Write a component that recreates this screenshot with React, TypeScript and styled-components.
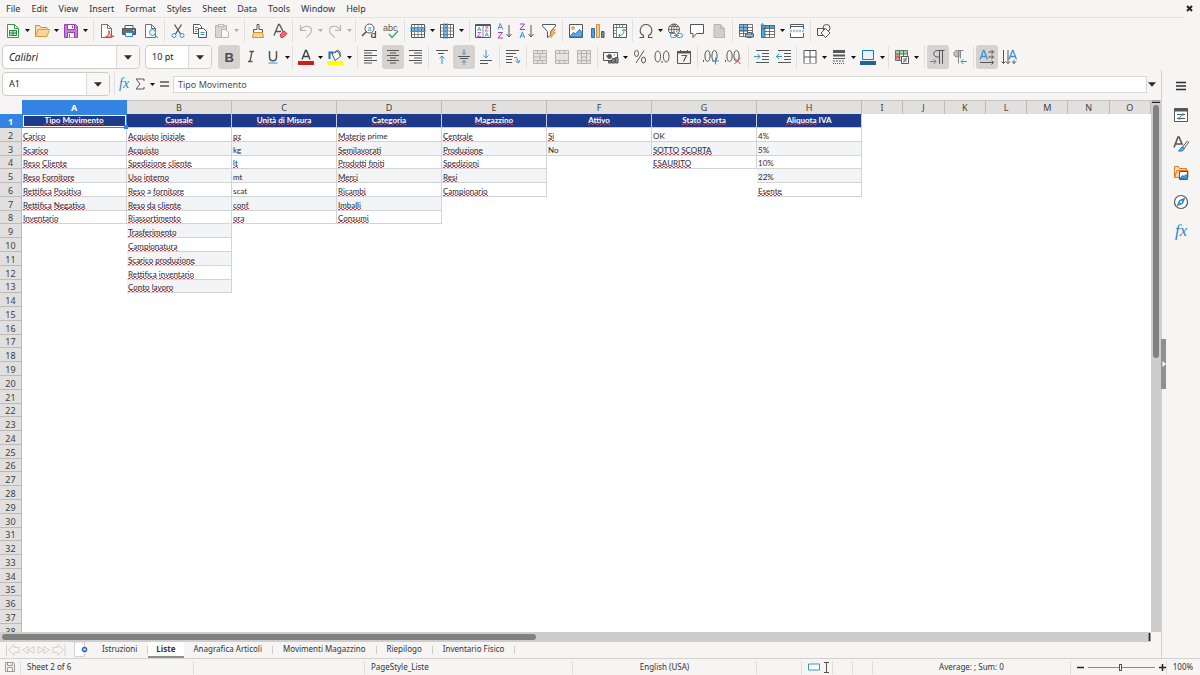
import React from "react";
import styled, { createGlobalStyle, css } from "styled-components";

const INK = "#555657";
const BLUE = "#3a93d0";
const PURPLE = "#a33fb5";
const UI = `"Noto Sans", "Liberation Sans", sans-serif`;
const SHEET = `Lato, "Liberation Sans", sans-serif`;

const Global = createGlobalStyle`
  * { box-sizing: border-box; }
  html, body { margin: 0; height: 100%; }
  #root { height: 100%; }
  body { background: #f6f5f4; color: #303436; font: 9px/12px ${UI}; overflow: hidden; }
  button, input { font: inherit; color: inherit; }
  button { border: 0; padding: 0; background: none; }
  svg { display: block; flex: none; }
`;

const Window = styled.div`
  display: flex;
  flex-direction: column;
  height: 100vh;
`;

const MenuBar = styled.nav`
  display: flex;
  align-items: center;
  height: 17px;
  padding-right: 6px;
`;
const MenuItem = styled.button`
  height: 16px;
  padding: 0 5px;
  margin-left: 1px;
  line-height: 16px;
`;
const CloseButton = styled.button`
  margin-left: auto;
`;

const Toolbar = styled.div<{ $ruled?: boolean }>`
  display: flex;
  align-items: center;
  height: ${(p) => (p.$ruled ? 27 : 26)}px;
  padding: 0 16px 0 2px;
  ${(p) =>
    p.$ruled &&
    css`
      background: linear-gradient(#e3e2e0, #e3e2e0) 0 0 / calc(100% - 16px) 1px no-repeat;
    `}
`;
const ToolButton = styled.button<{ $on?: boolean; $off?: boolean }>`
  display: flex;
  align-items: center;
  justify-content: center;
  flex: none;
  width: 22px;
  height: 24px;
  border-radius: 3px;
  background: ${(p) => (p.$on ? "#d5d2cf" : "transparent")};
  opacity: ${(p) => (p.$off ? 0.4 : 1)};
`;
const ArrowButton = styled.button<{ $off?: boolean }>`
  display: flex;
  align-items: center;
  justify-content: center;
  flex: none;
  width: 7px;
  height: 24px;
  opacity: ${(p) => (p.$off ? 0.3 : 1)};
`;
const Divider = styled.span<{ $gap: number }>`
  flex: none;
  width: 1px;
  height: 22px;
  margin: 0 2px 0 ${(p) => p.$gap - 3}px;
  background: #e2e0de;
`;
const Combo = styled.div<{ $width: number }>`
  display: flex;
  flex: none;
  width: ${(p) => p.$width}px;
  height: 24px;
  border: 1px solid #cfcbc7;
  border-radius: 4px;
  background: #fff;
  overflow: hidden;
`;
const ComboInput = styled.input<{ $italic?: boolean }>`
  flex: 1;
  min-width: 0;
  padding: 0 6px;
  border: 0;
  background: none;
  color: #1c1e20;
  font-size: ${(p) => (p.$italic ? 10 : 9)}px;
  font-style: ${(p) => (p.$italic ? "italic" : "normal")};
`;
const ComboArrow = styled.button`
  display: flex;
  align-items: center;
  justify-content: center;
  width: 23px;
  border-left: 1px solid #dcd9d6;
  background: #f8f7f6;
`;
const FontGroup = styled.div`
  display: flex;
  gap: 5px;
  margin-right: 6px;
`;

const Middle = styled.div`
  display: flex;
  flex: 1;
  min-height: 0;
`;
const Editor = styled.main`
  display: flex;
  flex-direction: column;
  flex: 1;
  min-width: 0;
`;
const FormulaBar = styled.div`
  display: flex;
  align-items: center;
  height: 30px;
  padding: 0 6px 2px 2px;
`;
const FormulaInput = styled.input`
  flex: 1;
  min-width: 0;
  height: 17px;
  margin: 0 1px 0 2px;
  padding: 0 4px;
  border: 1px solid #dad8d5;
  background: #fff;
  color: #4c5052;
  font-size: 9px;
`;
const SmallTool = styled.button<{ $width: number }>`
  display: flex;
  align-items: center;
  justify-content: center;
  flex: none;
  width: ${(p) => p.$width}px;
  height: 22px;
`;

const GridRow = styled.div`
  display: flex;
  flex: 1;
  min-height: 0;
`;
const GridView = styled.div`
  flex: 1;
  min-width: 0;
  overflow: hidden;
  background: #fff;
`;
const Sheet = styled.table`
  width: 100%;
  table-layout: fixed;
  border-collapse: separate;
  border-spacing: 0;
`;
const RowHeadCol = styled.col`
  width: 22px;
`;
const DataCol = styled.col`
  width: 105px;
`;
const Row = styled.tr`
  height: 14px;
  &:nth-child(9n + 4),
  &:nth-child(9n + 8) {
    height: 13px;
  }
`;
const headStyle = css<{ $active?: boolean }>`
  font-size: 9px;
  line-height: 11px;
  font-weight: ${(p) => (p.$active ? 700 : 400)};
  color: ${(p) => (p.$active ? "#fff" : "#3c3f41")};
  background: ${(p) => (p.$active ? "#3584e4" : "#e1e0df")};
`;
const ColumnHead = styled.th<{ $active?: boolean }>`
  ${headStyle}
  height: 14px;
  padding: 0 0 1px;
  border-right: 1px solid ${(p) => (p.$active ? "#3584e4" : "#bcbbba")};
  border-top: 1px solid ${(p) => (p.$active ? "#3584e4" : "#c4c3c2")};
`;
const RowHead = styled.th<{ $active?: boolean }>`
  ${headStyle}
  padding: 1px 0 0;
  border-bottom: 1px solid ${(p) => (p.$active ? "#3584e4" : "#bcbbba")};
  border-right: 1px solid ${(p) => (p.$active ? "#3584e4" : "#bcbbba")};
`;
const Corner = styled.td`
  padding: 0;
  background: #f6f5f4;
`;
const TitleCell = styled.td`
  position: relative;
  padding: 0;
  border-right: 1px solid #c5cbdc;
  border-bottom: 1px solid #c5cbdc;
  background: #1e3a8a;
  color: #fff;
  font: 700 8px/12px ${SHEET};
  text-align: center;
  vertical-align: top;
  white-space: nowrap;
`;
const Cell = styled.td<{ $filled: boolean; $alt: boolean }>`
  padding: 0 0 0 1px;
  font: 8px/10px ${SHEET};
  color: #1f2937;
  white-space: nowrap;
  vertical-align: bottom;
  ${(p) =>
    p.$filled &&
    css`
      border-right: 1px solid #d1d5db;
      border-bottom: 1px solid #d1d5db;
      background: ${p.$alt ? "#f3f4f6" : "#fff"};
    `}
`;
const Misspelt = styled.span`
  background: 
    repeating-linear-gradient(90deg, #e0393c 0 2px, transparent 2px 4px) 0 100% / 100% 1px no-repeat,
    repeating-linear-gradient(90deg, transparent 0 2px, #e0393c 2px 4px) 0 calc(100% - 1px) / 100% 1px no-repeat;
`;
const Cursor = styled.span`
  position: absolute;
  inset: 0 -1px -1px 0;
  border: 1px solid #3584e4;
  outline: 1px solid #fff;
  outline-offset: -2px;
  z-index: 1;
  &::after {
    content: "";
    position: absolute;
    right: -2px;
    bottom: -2px;
    width: 4px;
    height: 4px;
    background: #3584e4;
  }
`;

const VScroll = styled.div`
  display: flex;
  flex-direction: column;
  align-items: center;
  width: 10px;
  background: #cdcdcd;
`;
const VSplit = styled.span`
  width: 8px;
  height: 3px;
  margin-bottom: 2px;
  border-bottom: 1px solid #222;
  background: #aaa;
`;
const VThumb = styled.span`
  width: 6px;
  height: 47.6%;
  border-radius: 3px;
  background: #7f807f;
`;
const HScroll = styled.div`
  display: flex;
  align-items: center;
  justify-content: space-between;
  height: 10px;
  margin-right: 10px;
  padding: 0 0 0 2px;
  background: #cdcdcd;
`;
const HThumb = styled.span`
  width: 46.5%;
  height: 6px;
  border-radius: 3px;
  background: #7f817f;
`;
const HSplit = styled.span`
  width: 3px;
  height: 8px;
  border-right: 1px solid #999;
  border-left: 1px solid #999;
  background: #222;
`;

const TabBar = styled.div`
  display: flex;
  align-items: flex-start;
  height: 16px;
  padding-left: 6px;
`;
const TabNav = styled.button`
  width: 15px;
  height: 15px;
  display: flex;
  align-items: center;
  justify-content: center;
`;
const AddSheet = styled.button`
  display: flex;
  width: 18px;
  height: 15px;
  margin-left: 8px;
`;
const Tab = styled.button<{ $active?: boolean }>`
  height: 16px;
  padding: 0 11px 2px 10px;
  line-height: 14px;
  font-size: 8px;
  white-space: nowrap;
  background: linear-gradient(#cfcdcb, #cfcdcb) 100% 4px / 1px 8px no-repeat;
  ${(p) =>
    p.$active &&
    css`
      padding: 0 8px;
      font-weight: 700;
      background: #fff;
      border-bottom: 2px solid #8d8f8f;
    `}
`;

const SideBar = styled.aside`
  position: relative;
  display: flex;
  flex-direction: column;
  align-items: center;
  gap: 7px;
  width: 39px;
  padding: 5px 0 0;
  border-left: 1px solid #d4d2cf;
`;
const SideButton = styled.button`
  display: flex;
  align-items: center;
  justify-content: center;
  width: 24px;
  height: 22px;
`;
const SideHandle = styled.button`
  position: absolute;
  left: -1px;
  top: 50%;
  width: 5px;
  height: 50px;
  margin-top: -25px;
  background: #8f9090;
  display: flex;
  align-items: center;
  justify-content: center;
`;

const StatusBar = styled.footer`
  display: grid;
  grid-template-columns: 21fr 173fr 171fr 208fr 184fr 45fr 31fr 20fr 20fr 198fr 96fr 33fr;
  align-items: center;
  height: 17px;
  border-top: 1px solid #d4d2cf;
  font-size: 8px;
`;
const Status = styled.div<{ $center?: boolean; $bare?: boolean }>`
  display: flex;
  align-items: center;
  justify-content: ${(p) => (p.$center ? "center" : "flex-start")};
  gap: 4px;
  min-width: 0;
  height: 13px;
  padding-left: ${(p) => (p.$center ? 0 : 6)}px;
  border-right: 1px solid ${(p) => (p.$bare ? "transparent" : "#e0dedc")};
  white-space: nowrap;
`;
const ZoomSlider = styled.input`
  appearance: none;
  flex: 1;
  min-width: 0;
  height: 9px;
  margin: 0;
  background: linear-gradient(#8a8a8a, #8a8a8a) 0 50% / 100% 1px no-repeat;
  &::-webkit-slider-thumb {
    appearance: none;
    width: 3px;
    height: 7px;
    border: 1px solid #555;
    background: #f6f5f4;
  }
`;

type P = { children: React.ReactNode; w?: number; h?: number };
const Svg = ({ children, w = 16, h = 16 }: P) => (
  <svg width={w} height={h} viewBox={`0 0 ${w} ${h}`} fill="none" stroke={INK} strokeWidth="1" aria-hidden="true">
    {children}
  </svg>
);
const Caret = ({ big }: { big?: boolean }) =>
  big ? (
    <svg width="8" height="5" viewBox="0 0 8 5" aria-hidden="true"><path d="M0 0.3h8L4 4.8z" fill="#2b2d2e" /></svg>
  ) : (
    <svg width="5" height="3" viewBox="0 0 5 3" aria-hidden="true"><path d="M0 0h5L2.500 3z" fill="#111" /></svg>
  );

const alignLines = (rows: [number, number][]) =>
  rows.map(([a, b], i) => <path key={i} d={`M${a} ${1.5 + i * 2.5}H${b}`} />);

const Glyph = styled.text`
  stroke: none;
  font-family: "Liberation Sans", sans-serif;
`;
const Serif = styled.text`
  stroke: none;
  font-family: "Liberation Serif", serif;
`;

const icons: Record<string, React.ReactNode> = {
  new: (
    <Svg>
      <path d="M2.500 1.500h7l4 4v9h-11z" fill="#fff" stroke="#3b9a48" />
      <path d="M9.500 1.500v4h4" stroke="#3b9a48" />
      <path d="M4.500 7.500h7v5h-7zM4.500 10h7M8 7.500v5" stroke="#2e8b3d" fill="#bfe5c3" />
    </Svg>
  ),
  open: (
    <Svg>
      <path d="M1.500 13.500v-11h4l1.500 2h6v2" stroke="#e08b28" fill="#fbe0b5" />
      <path d="M1.500 13.500l2.500-7h11.500l-2.500 7z" stroke="#e39a3c" fill="#f9d59b" />
    </Svg>
  ),
  save: (
    <Svg>
      <path d="M1.500 1.500h11l2 2v11h-13z" fill="#c47fd0" stroke="#9a3fae" />
      <path d="M4.500 1.500h7v5h-7z" fill="#fff" stroke="#9a3fae" />
      <path d="M4.500 14.500v-5h7v5" fill="#fff" stroke="#9a3fae" />
      <path d="M9.500 2.500v2.500M6.500 11v3" stroke="#9a3fae" />
    </Svg>
  ),
  pdf: (
    <Svg>
      <path d="M2.500 1.500h6l4 4v9h-10z" fill="#fff" stroke="#6e6e6e" />
      <path d="M8.500 1.500v4h4" stroke="#6e6e6e" />
      <path d="M6.500 14c3-1.500 4-4 3.500-6.500c0 4 2 5.500 5 6c-3-.8-6-.5-8.500.5z" stroke="#d8343a" strokeWidth=".9" fill="#fff" />
    </Svg>
  ),
  print: (
    <Svg>
      <path d="M4 5.500v-3h8v3" fill="#fff" />
      <path d="M1.500 5.500h13v6h-13z" fill="#6a6d6f" />
      <path d="M4.500 9.500h7v4h-7z" fill="#fff" stroke="#2f8bd0" />
      <path d="M12 7.500h1" stroke="#fff" />
    </Svg>
  ),
  preview: (
    <Svg>
      <path d="M2.500 1.500h6l4 4v9h-10z" fill="#fff" stroke="#6e6e6e" />
      <path d="M8.500 1.500v4h4" stroke="#6e6e6e" />
      <circle cx="9.500" cy="9.500" r="3" stroke={BLUE} fill="#e9f4fb" />
      <path d="M11.500 11.500l3.500 3.500" stroke={BLUE} />
    </Svg>
  ),
  cut: (
    <Svg>
      <path d="M4.500 1.500l6 9.500M11.500 1.500l-6 9.500" strokeWidth="1.300" />
      <circle cx="4" cy="12.500" r="2" stroke={BLUE} />
      <circle cx="12" cy="12.500" r="2" stroke={BLUE} />
    </Svg>
  ),
  copy: (
    <Svg>
      <path d="M1.500 1.500h6l2 2v7h-8z" fill="#fff" />
      <path d="M6.500 5.500h5l3 3v6h-8z" fill="#fff" />
      <path d="M3 4.500h3M3 6.500h3M3 8.500h2M8.500 9.500h4M8.500 11.500h4" stroke={BLUE} />
    </Svg>
  ),
  paste: (
    <Svg>
      <path d="M1.500 2.500h11v12h-11z" fill="#aaa" />
      <path d="M4.500 1.500h5v2h-5z" fill="#fff" />
      <path d="M7.500 6.500h4l3 3v5h-7z" fill="#fff" />
    </Svg>
  ),
  clone: (
    <Svg>
      <path d="M7 1.500h2v5h3.500v3h-9v-3h3.500z" fill="#fff" />
      <path d="M3.500 9.500h9l1 5h-11z" fill="#f9d59b" stroke="#e08b28" />
    </Svg>
  ),
  clear: (
    <Svg>
      <path d="M2 12.500l4.500-11h1l4 8M4 8.500h5" strokeWidth="1.300" />
      <path d="M8 12l4-4 3 2.500-4 4h-2z" fill="#f0686b" stroke="#d8343a" />
    </Svg>
  ),
  undo: <Svg><path d="M2.500 2v5.500h5.500M2.500 7.500c2.500-6 11-5.500 11 0c0 3-3 5-5.500 7" strokeWidth="1.100" /></Svg>,
  redo: <Svg><path d="M13.500 2v5.500h-5.500M13.500 7.500c-2.500-6-11-5.500-11 0c0 3 3 5 5.500 7" strokeWidth="1.100" /></Svg>,
  find: (
    <Svg>
      <circle cx="8.500" cy="5.500" r="4.500" fill="#fff" />
      <path d="M5.500 8.500l-4.500 4.500" strokeWidth="1.600" />
      <Glyph x="6.500" y="7.500" fontSize="7" fill={BLUE}>a</Glyph>
      <path d="M14.500 8v7M14.500 12.500a2 2 0 1 0-4 0a2 2 0 1 0 4 0" strokeWidth="1.200" />
    </Svg>
  ),
  spell: (
    <Svg>
      <Glyph x="0" y="8" fontSize="9" fill={INK}>abc</Glyph>
      <path d="M6 11l3 3.500 6-6.500" stroke="#2fa36b" strokeWidth="1.300" />
    </Svg>
  ),
  rows: (
    <Svg>
      <path d="M1.500 1.500h13v13h-13z" fill="#fff" stroke="none" />
      <path d="M.5 4.500h15v4h-15z" fill="#6dbcec" stroke="none" />
      <path d="M4.500 1.500v13M8 1.500v13M11.500 1.500v13M1.500 11.500h13" strokeWidth=".7" />
      <path d="M1.500 1.500h13v13h-13z" />
      <path d="M.5 4.500h15M.5 8.500h15" stroke={BLUE} />
    </Svg>
  ),
  cols: (
    <Svg>
      <path d="M1.500 1.500h13v13h-13z" fill="#fff" stroke="none" />
      <path d="M4.500 .5h4v15h-4z" fill="#6dbcec" stroke="none" />
      <path d="M1.500 5h13M1.500 8h13M1.500 11.500h13M11.500 1.500v13" strokeWidth=".7" />
      <path d="M1.500 1.500h13v13h-13z" />
      <path d="M4.500 .5v15M8.500 .5v15" stroke={BLUE} />
    </Svg>
  ),
  sort: (
    <Svg>
      <path d="M.5 1.500h15v13h-15z" fill="#fff" />
      <path d="M.5 2.500h15" />
      <path d="M8 2v12.500" strokeWidth=".7" />
      <path d="M2.500 8l1.700-4 1.800 4M3 6.700h2.500M10 13.500l1.700-4 1.800 4M10.500 12.200h2.500" stroke={BLUE} strokeWidth=".8" />
      <path d="M2.500 9.500h3.200l-3.200 4h3.500M10 4h3.200l-3.200 4h3.500" stroke={PURPLE} strokeWidth=".8" />
    </Svg>
  ),
  az: (
    <Svg>
      <path d="M1 6.500l2.300-6 2.400 6M1.800 4.500h3" stroke={BLUE} />
      <path d="M1 9.500h4.500l-4.500 5.500h5" stroke={PURPLE} />
      <path d="M12 2v12M9.500 11l2.500 3 2.500-3" />
    </Svg>
  ),
  za: (
    <Svg>
      <path d="M1 1h4.500l-4.500 5.500h5" stroke={PURPLE} />
      <path d="M1 15l2.300-6 2.400 6M1.800 13h3" stroke={BLUE} />
      <path d="M12 2v12M9.500 11l2.500 3 2.500-3" />
    </Svg>
  ),
  filter: (
    <Svg>
      <path d="M1.500 1.500h13v1.500l-5 5.500v4l-3 2v-6l-5-5.500z" fill="#fff" />
      <path d="M12 6.500l-3 5h2l-1.500 3.500 5-5.500h-2.500l2.500-3z" fill="#f8b96b" stroke="#e8892a" strokeWidth=".7" />
    </Svg>
  ),
  image: (
    <Svg>
      <path d="M1.500 1.500h13v13h-13z" fill="#fff" />
      <circle cx="5" cy="5" r="1.500" fill="#f5b04c" stroke="#e8892a" strokeWidth=".6" />
      <path d="M2 13.500l3.500-4 2 1.500 4-4.500 2.500 3v4.500h-12z" fill="#5fa9dc" stroke="#2475b8" />
    </Svg>
  ),
  chart: (
    <Svg>
      <path d="M1.500 5.500h3v9h-3z" fill="#4a9fdd" stroke="#2475b8" />
      <path d="M6.500 1.500h3v13h-3z" fill="#f9cf8f" stroke="#e08b28" />
      <path d="M11.500 8.500h2.500v6h-2.500z" fill="#888" />
    </Svg>
  ),
  pivot: (
    <Svg>
      <path d="M1.500 1.500h13v13h-13z" fill="#fff" />
      <path d="M4.500 1.500v13M1.500 4.500h13M7.500 1.500v3M10.500 1.500v3M1.500 7.500h3M1.500 10.500h3" strokeWidth=".7" />
      <path d="M7 12.500c4 0 5-2 5-6M10 8l2-2 2 2M8.500 10.500l-2 2 2 2" stroke={BLUE} />
    </Svg>
  ),
  omega: <Svg><path d="M1.500 14.500h4v-2c-6-3-3-11 2.500-11s8.500 8 2.500 11v2h4" strokeWidth="1.100" /></Svg>,
  link: (
    <Svg>
      <circle cx="7" cy="6.500" r="5.500" />
      <path d="M1.500 6.500h11M2.500 3.500h9M2.500 9.500h5M7 1v11M7 1c-3.500 3-3.500 8 0 11M7 1c3.500 3 3.500 6 2.500 8" strokeWidth=".8" />
      <rect x="3.500" y="10.500" width="6" height="4" rx="2" stroke={BLUE} fill="#f6f5f4" />
      <rect x="9.500" y="10.500" width="6" height="4" rx="2" stroke={BLUE} fill="#f6f5f4" />
      <path d="M7 12.500h5" stroke={BLUE} />
    </Svg>
  ),
  comment: <Svg><path d="M1.500 1.500h13v9h-7l-3.500 4v-4h-2.500z" fill="#fff" /></Svg>,
  header: (
    <Svg>
      <path d="M3 1.500h6.500l4 4v9h-10.500z" fill="#999" />
      <path d="M9.500 1.500v4h4" />
    </Svg>
  ),
  printRange: (
    <Svg>
      <path d="M1.500 1.500h13v12h-13z" fill="#fff" stroke="none" />
      <path d="M1 1h9v8h-9z" fill="#6dbcec" stroke="none" />
      <path d="M1.500 1.500h13v12h-13zM1.500 4.500h13M1.500 7.500h13M1.500 10.500h13M5.500 1.500v12M9.500 1.500v12" strokeWidth=".8" />
      <path d="M9.500 9.500h4v5h-4z" fill="#fff" />
      <path d="M7.500 11h8v3h-8z" fill="#8fc6ec" />
    </Svg>
  ),
  freeze: (
    <Svg>
      <path d="M1.500 2.500h13v12h-13z" fill="#fff" stroke="none" />
      <path d="M1 2h14v3.500h-10v9.500h-4z" fill="#4ba6e0" stroke="none" />
      <path d="M1.500 2.500h13v12h-13zM1.500 5.500h13M5 2.500v12M9.500 2.500v12M5 8.500h9.500M5 11.500h9.500" strokeWidth=".8" />
      <path d="M2.500 0v4M.5 2h4" stroke={BLUE} />
    </Svg>
  ),
  split: (
    <Svg>
      <path d="M1.500 6v-4.500h13v4.500M1.500 10v4.500h13v-4.500M1.500 3.500h13" fill="#fff" />
      <path d="M1 8h14" stroke={BLUE} strokeDasharray="2 1" />
    </Svg>
  ),
  shapes: (
    <Svg>
      <path d="M1.500 5.500h7v7h-7z" />
      <circle cx="10.500" cy="5" r="3.500" />
      <path d="M9.500 5.500l4.500 4.500-4.500 4.500-4.500-4.500z" fill="#f6f5f4" />
    </Svg>
  ),
  bold: <Svg><Glyph x="3.500" y="12.500" fontSize="13" fontWeight="700" fill="#4a4c4d">B</Glyph></Svg>,
  italic: <Svg><path d="M6.500 2.500h4.500M5 12.500h4.500M9 2.500l-2 10" strokeWidth="1.300" /></Svg>,
  underline: (
    <Svg>
      <path d="M4.500 2v6c0 5 7 5 7 0v-6" strokeWidth="1.500" />
      <path d="M3.500 14h9" stroke={BLUE} />
    </Svg>
  ),
  color: (
    <Svg>
      <path d="M4 10.500l3.500-9h1l3.500 9M5.500 7.500h5" strokeWidth="1.400" stroke="#3f4142" />
      <path d="M0 14h16" stroke="#c9211e" strokeWidth="4" />
    </Svg>
  ),
  fill: (
    <Svg>
      <path d="M5 4.500l5-2.500 4 5-6 4.500z" fill="#fff" />
      <path d="M8 4l2.500-3 2.500 2v4" />
      <path d="M2.500 10v-6.500h4" stroke="#2475b8" strokeWidth="2" />
      <path d="M0 14h16" stroke="#ffff00" strokeWidth="4" />
    </Svg>
  ),
  left: <Svg>{alignLines([[1, 14], [1, 9], [1, 14], [1, 9], [1, 14], [1, 9]])}</Svg>,
  center: <Svg>{alignLines([[2, 14], [5, 11], [2, 14], [5, 11], [2, 14], [5, 11]])}</Svg>,
  right: <Svg>{alignLines([[2, 15], [7, 15], [2, 15], [7, 15], [2, 15], [7, 15]])}</Svg>,
  top: (
    <Svg>
      <path d="M2 1.500h12M4 4.500h6" />
      <path d="M8 15v-8M5.500 9.500l2.500-2.500 2.500 2.500" stroke={BLUE} />
    </Svg>
  ),
  middle: (
    <Svg>
      <path d="M2 7.500h12M4 9.500h8" />
      <path d="M8 0v5.500M6 3.500l2 2 2-2M8 16v-4.500M6 13.500l2-2 2 2" stroke={BLUE} />
    </Svg>
  ),
  bottom: (
    <Svg>
      <path d="M2 11.500h12M2 14.500h8" />
      <path d="M8 1v8M5.500 6.500l2.500 2.500 2.500-2.500" stroke={BLUE} />
    </Svg>
  ),
  wrap: (
    <Svg>
      <path d="M1 1.500h13M1 4.500h10M1 7.500h7M1 10.500h6M1 13.500h6" />
      <path d="M9 8.500h2.500l2 5M10.500 12l3 2 1.500-3" stroke={BLUE} />
    </Svg>
  ),
  merge1: <Svg><path d="M1.500 1.500h13v13h-13zM1.500 4.500h13M1.500 11.500h13M5.500 1.500v3M10.500 1.500v3M5.500 11.500v3M10.500 11.500v3M1.500 8h13M8 4.500v7" fill="#ccc" /></Svg>,
  merge2: <Svg><path d="M1.500 1.500h13v13h-13zM1.500 4.500h13M1.500 11.500h13M5.500 1.500v3M10.500 1.500v3M5.500 11.500v3M10.500 11.500v3" fill="#ccc" /></Svg>,
  merge3: <Svg><path d="M1.500 1.500h13v13h-13zM1.500 4.500h13M1.500 11.500h13M5.500 1.500v13M10.500 1.500v13M5.500 8h5" fill="#ccc" /></Svg>,
  currency: (
    <Svg>
      <path d="M.5 3.500h14v8h-14z" />
      <circle cx="6.500" cy="7.500" r="2" fill={INK} />
      <path d="M3 7h1M11 6h1" />
      <path d="M9 9.500h3v4.500h-3zM12.500 8.500h2.500v5.500h-2.500zM5.500 12h3v2h-3z" fill="#8a8a8a" />
    </Svg>
  ),
  percent: (
    <Svg>
      <ellipse cx="4.500" cy="4.500" rx="2" ry="3" />
      <ellipse cx="11.500" cy="11" rx="2" ry="3" />
      <path d="M12 1.500l-8 12.500" />
    </Svg>
  ),
  decimal: (
    <Svg>
      <ellipse cx="3.800" cy="7.500" rx="2.800" ry="5.500" />
      <ellipse cx="12.200" cy="7.500" rx="2.800" ry="5.500" />
      <path d="M8 12v2" />
    </Svg>
  ),
  date: (
    <Svg>
      <path d="M1.500 2.500h13v12h-13zM4.500 1v2M11.500 1v2" />
      <path d="M1.500 3.500h13" strokeWidth="2" />
      <path d="M5.500 6.500h5l-3 6" strokeWidth="1.200" />
    </Svg>
  ),
  addDec: (
    <Svg>
      <path d="M.5 11v2" />
      <ellipse cx="4.500" cy="7" rx="2.600" ry="5.500" />
      <ellipse cx="11.500" cy="7" rx="2.600" ry="5.500" />
      <path d="M12.500 8.500v7M9 12h7" stroke={BLUE} />
    </Svg>
  ),
  delDec: (
    <Svg>
      <path d="M.5 11v2" />
      <ellipse cx="4.500" cy="7" rx="2.600" ry="5.500" />
      <ellipse cx="11.500" cy="7" rx="2.600" ry="5.500" />
      <path d="M9.500 9l6 6M15.500 9l-6 6" stroke="#e0393c" />
    </Svg>
  ),
  indent: (
    <Svg>
      <path d="M2 1.500h13M8 4.500h7M8 7.500h7M8 10.500h7M2 13.500h13" />
      <path d="M0 7.500h6M3.500 5l2.500 2.500-2.500 2.500" stroke={BLUE} />
    </Svg>
  ),
  outdent: (
    <Svg>
      <path d="M2 1.500h13M8 4.500h7M8 7.500h7M8 10.500h7M2 13.500h13" />
      <path d="M6 7.500h-6M3 5l-2.500 2.500 2.500 2.500" stroke={BLUE} />
    </Svg>
  ),
  borders: (
    <Svg>
      <path d="M2 1.500h12v13h-12z" fill="#fff" />
      <path d="M8 1.500v13M2 8h12" />
      <path d="M2 14.500h12" stroke="#e0a868" />
    </Svg>
  ),
  lineStyle: (
    <Svg>
      <path d="M2 2.500h12" strokeWidth="3" />
      <path d="M2 6.500h12" strokeWidth="2" />
      <path d="M2 9.500h12" />
      <path d="M2 12h12" strokeDasharray="2 1" />
      <path d="M2 14.500h12" strokeDasharray="1 1" />
    </Svg>
  ),
  borderColor: (
    <Svg>
      <path d="M2.500 1.500h11v9h-11z" fill="#e8f3fb" stroke="#2475b8" />
      <path d="M0 14h16" stroke="#2a6099" strokeWidth="4" />
    </Svg>
  ),
  conditional: (
    <Svg>
      <path d="M1.500 1.500h12v3.500h-12z" fill="#8fdc9b" stroke="none" />
      <path d="M1.500 5h4v6.500h-4z" fill="#f18c8e" stroke="none" />
      <path d="M1.500 1.500h12v10h-12zM1.500 5h12M1.500 8h12M5.500 1.500v10M9.500 1.500v10" strokeWidth=".8" />
      <path d="M7.500 7.500h7v7h-7z" fill="#fff" />
      <path d="M9 10h4M9 12h4M12.500 8.500l-3 5" strokeWidth=".8" />
    </Svg>
  ),
  ltr: (
    <Svg>
      <path d="M14.500 1.500h-7c-5 0-5 6.500 0 6.500h1.500M9.500 1.500v13.500M12.500 1.500v13.500" />
      <path d="M0 12.500h6M3.500 10l2.500 2.500-2.500 2.500" stroke={BLUE} />
    </Svg>
  ),
  rtl: (
    <Svg>
      <path d="M4.500 2h4v6h-3c-4 0-4-5-1-6z" fill="#bbb" stroke="none" />
      <path d="M11.500 1.500h-6c-5 0-5 6.500 0 6.500h1v6.500M6.500 1.500v12M8.500 1.500v8" stroke="#888" />
      <path d="M15 12.500h-6M11.500 10l-2.500 2.500 2.500 2.500" stroke={BLUE} />
    </Svg>
  ),
  textH: (
    <Svg>
      <path d="M1 10.500l3.500-9h.5l3.500 9M2.500 7.500h4.500" stroke={BLUE} strokeWidth="1.300" />
      <path d="M9.500 3h5M12.500 1l2 2-2 2M9.500 8h5M12.500 6l2 2-2 2M1 13.500h13.500M12.500 11.500l2 2-2 2" />
    </Svg>
  ),
  textV: (
    <Svg>
      <path d="M8 10.500l3.500-9h.5l3.500 9M9.500 7.500h4.500" stroke={BLUE} strokeWidth="1.300" />
      <path d="M2.500 1v13.500M.5 12.500l2 2 2-2M7 1v13.500M5 12.500l2 2 2-2M13 11v3.500M11 12.500l2 2 2-2" />
    </Svg>
  ),
};

type ToolSpec = [string, string, ("on" | "off" | "drop" | "offdrop")?] | number;

const standard: ToolSpec[] = [
  ["new", "New", "drop"], ["open", "Open", "drop"], ["save", "Save", "drop"], 7,
  ["pdf", "Export as PDF"], ["print", "Print"], ["preview", "Print Preview"], 5,
  ["cut", "Cut"], ["copy", "Copy"], ["paste", "Paste", "offdrop"], 7,
  ["clone", "Clone Formatting"], ["clear", "Clear Formatting"], 4,
  ["undo", "Undo", "offdrop"], ["redo", "Redo", "offdrop"], 5,
  ["find", "Find and Replace"], ["spell", "Spelling"], 5,
  ["rows", "Row", "drop"], ["cols", "Column", "drop"], 7,
  ["sort", "Sort"], ["az", "Sort Ascending"], ["za", "Sort Descending"], ["filter", "AutoFilter"], 5,
  ["image", "Insert Image"], ["chart", "Insert Chart"], ["pivot", "Pivot Table"], 4,
  ["omega", "Special Character", "drop"], ["link", "Hyperlink"], ["comment", "Comment"], ["header", "Headers and Footers", "off"], 5,
  ["printRange", "Print Area"], ["freeze", "Freeze Panes", "drop"], ["split", "Split Window"], 5,
  ["shapes", "Draw Functions"],
];
const formatting: ToolSpec[] = [
  ["bold", "Bold", "on"], ["italic", "Italic"], ["underline", "Underline", "drop"], 4,
  ["color", "Font Color", "drop"], ["fill", "Background Color", "drop"], 7,
  ["left", "Align Left"], ["center", "Center", "on"], ["right", "Align Right"], 5,
  ["top", "Align Top"], ["middle", "Center Vertically", "on"], ["bottom", "Align Bottom"], 5,
  ["wrap", "Wrap Text"], 5,
  ["merge1", "Merge and Center", "off"], ["merge2", "Merge", "off"], ["merge3", "Unmerge", "off"], 5,
  ["currency", "Currency", "drop"], ["percent", "Percent"], ["decimal", "Number"], ["date", "Date"], 5,
  ["addDec", "Add Decimal"], ["delDec", "Delete Decimal"], 7,
  ["indent", "Increase Indent"], ["outdent", "Decrease Indent"], 4,
  ["borders", "Borders", "drop"], ["lineStyle", "Border Style", "drop"], ["borderColor", "Border Color", "drop"], 5,
  ["conditional", "Conditional Formatting", "drop"], 7,
  ["ltr", "Left-To-Right", "on"], ["rtl", "Right-To-Left"], 5,
  ["textH", "Text Direction Horizontal", "on"], ["textV", "Text Direction Vertical"],
];

const Tools = ({ items }: { items: ToolSpec[] }) => (
  <>
    {items.map((t, i) => {
      if (typeof t === "number") return <Divider key={i} $gap={t} />;
      const [id, label, mode] = t;
      const off = mode === "off" || mode === "offdrop";
      return (
        <React.Fragment key={i}>
          <ToolButton type="button" aria-label={label} $on={mode === "on"} $off={off}>{icons[id]}</ToolButton>
          {(mode === "drop" || mode === "offdrop") && (
            <ArrowButton type="button" aria-label={`${label} options`} $off={off}><Caret /></ArrowButton>
          )}
        </React.Fragment>
      );
    })}
  </>
);

const titles = ["Tipo Movimento", "Causale", "Unità di Misura", "Categoria", "Magazzino", "Attivo", "Stato Scorta", "Aliquota IVA"];
const lists: string[][] = [
  ["Carico", "Scarico", "Reso Cliente", "Reso Fornitore", "Rettifica Positiva", "Rettifica Negativa", "Inventario"],
  ["Acquisto iniziale", "Acquisto", "Spedizione cliente", "Uso interno", "Reso a fornitore", "Reso da cliente", "Riassortimento", "Trasferimento", "Campionatura", "Scarico produzione", "Rettifica inventario", "Conto lavoro"],
  ["pz", "kg", "lt", "mt", "scat", "conf", "ora"],
  ["Materie prime", "Semilavorati", "Prodotti finiti", "Merci", "Ricambi", "Imballi", "Consumi"],
  ["Centrale", "Produzione", "Spedizioni", "Resi", "Campionario"],
  ["Sì", "No"],
  ["OK", "SOTTO SCORTA", "ESAURITO"],
  ["4%", "5%", "10%", "22%", "Esente"],
];
const known = new Set(["kg", "mt", "scat", "No", "OK", "prime", "a", "IVA"]);
const Spelled = ({ text }: { text: string }) => (
  <>
    {text.split(" ").map((w, i) => (
      <React.Fragment key={i}>
        {i > 0 && " "}
        {known.has(w) || w.endsWith("%") ? w : <Misspelt>{w}</Misspelt>}
      </React.Fragment>
    ))}
  </>
);

const letters = "ABCDEFGHIJKLMNO".split("");
const tabs = ["Istruzioni", "Liste", "Anagrafica Articoli", "Movimenti Magazzino", "Riepilogo", "Inventario Fisico"];
const tabNav = [
  { label: "First sheet", d: "M.5 1v12M8 1.500L2.500 7L8 12.500v-3h5v-5h-5z" },
  { label: "Previous sheet", d: "M7 3.500L1.500 7L7 10.500zM13 3.500L7.500 7l5.500 3.500z" },
  { label: "Next sheet", d: "M2 3.500L7.500 7L2 10.500zM8 3.500l5.500 3.500L8 10.500z" },
  { label: "Last sheet", d: "M14 1v12M7 1.500L12.500 7L7 12.500v-3h-5v-5h5z" },
];

export default function App() {
  return (
    <Window>
      <Global />
      <MenuBar aria-label="Menu">
        {["File", "Edit", "View", "Insert", "Format", "Styles", "Sheet", "Data", "Tools", "Window", "Help"].map((m) => (
          <MenuItem key={m} type="button">{m}</MenuItem>
        ))}
        <CloseButton type="button" aria-label="Close document">
          <svg width="9" height="9" viewBox="0 0 9 9" aria-hidden="true"><path d="M2 2l5 5M7 2l-5 5" stroke="#222" strokeWidth="2" /></svg>
        </CloseButton>
      </MenuBar>
      <Toolbar $ruled><Tools items={standard} /></Toolbar>
      <Toolbar>
        <FontGroup>
          <Combo $width={138}>
            <ComboInput aria-label="Font name" defaultValue="Calibri" $italic />
            <ComboArrow type="button" aria-label="Font list"><Caret big /></ComboArrow>
          </Combo>
          <Combo $width={67}>
            <ComboInput aria-label="Font size" defaultValue="10 pt" />
            <ComboArrow type="button" aria-label="Size list"><Caret big /></ComboArrow>
          </Combo>
        </FontGroup>
        <Tools items={formatting} />
      </Toolbar>

      <Middle>
        <Editor>
          <FormulaBar>
            <Combo $width={108}>
              <ComboInput aria-label="Name box" defaultValue="A1" />
              <ComboArrow type="button" aria-label="Named ranges"><Caret big /></ComboArrow>
            </Combo>
            <Divider $gap={7} />
            <SmallTool type="button" aria-label="Function wizard" $width={16}>
              <Svg w={12} h={14}><Serif x="0" y="11" fontSize="14" fontStyle="italic" fill="#2f86c9">fx</Serif></Svg>
            </SmallTool>
            <SmallTool type="button" aria-label="Select function" $width={14}>
              <Svg w={10} h={12}><path d="M9 3V1H1l4 5-4 5h8V9" /></Svg>
            </SmallTool>
            <SmallTool type="button" aria-label="Function list" $width={10}><Caret /></SmallTool>
            <SmallTool type="button" aria-label="Formula" $width={14}>
              <Svg w={9} h={8}><path d="M0 2h9M0 6h9" strokeWidth="1.500" /></Svg>
            </SmallTool>
            <FormulaInput aria-label="Input line" defaultValue="Tipo Movimento" />
            <ArrowButton type="button" aria-label="Expand formula bar"><Caret big /></ArrowButton>
          </FormulaBar>

          <GridRow>
            <GridView>
              <Sheet>
                <colgroup>
                  <RowHeadCol />
                  {titles.map((t) => <DataCol key={t} />)}
                  {letters.slice(8).map((l) => <col key={l} />)}
                </colgroup>
                <thead>
                  <tr>
                    <Corner />
                    {letters.map((l, i) => <ColumnHead key={l} scope="col" $active={i === 0}>{l}</ColumnHead>)}
                  </tr>
                </thead>
                <tbody>
                  {Array.from({ length: 38 }, (_, r) => (
                    <Row key={r}>
                      <RowHead scope="row" $active={r === 0}>{r + 1}</RowHead>
                      {titles.map((t, c) =>
                        r === 0 ? (
                          <TitleCell key={t}>
                            <Spelled text={t} />
                            {c === 0 && <Cursor />}
                          </TitleCell>
                        ) : (
                          <Cell key={t} $filled={!!lists[c][r - 1]} $alt={r % 2 === 0}>
                            {lists[c][r - 1] && <Spelled text={lists[c][r - 1]} />}
                          </Cell>
                        )
                      )}
                      <td colSpan={7} />
                    </Row>
                  ))}
                </tbody>
              </Sheet>
            </GridView>
            <VScroll><VSplit /><VThumb /></VScroll>
          </GridRow>
          <HScroll><HThumb /><HSplit /></HScroll>

          <TabBar>
            {tabNav.map((n) => (
              <TabNav key={n.label} type="button" aria-label={n.label}>
                <svg width="15" height="14" viewBox="0 0 15 14" fill="none" stroke="#d3d2d1" aria-hidden="true"><path d={n.d} /></svg>
              </TabNav>
            ))}
            <AddSheet type="button" aria-label="Add sheet">
              <svg width="15" height="15" viewBox="0 0 15 15" fill="none" aria-hidden="true">
                <path d="M.5 0h10v14.500h-10z" fill="#fff" stroke="#d2d2d2" />
                <circle cx="10.500" cy="7.500" r="2" stroke="#2f68b0" strokeWidth="1.500" />
              </svg>
            </AddSheet>
            {tabs.map((t) => <Tab key={t} type="button" $active={t === "Liste"}>{t}</Tab>)}
          </TabBar>
        </Editor>

        <SideBar>
          <SideButton type="button" aria-label="Sidebar settings">
            <Svg w={10} h={10}><path d="M0 1.500h10M0 5h10M0 8.500h10" stroke="#2b2d2e" strokeWidth="1.300" /></Svg>
          </SideButton>
          <SideButton type="button" aria-label="Properties">
            <Svg>
              <path d="M1.500 1.500h13v13h-13z" fill="#fff" />
              <path d="M1 3h14" strokeWidth="3" />
              <path d="M4 7.500h8M4 11.500h8" />
              <path d="M10 6v3M6 10v3M9 7.500l-3 4" stroke={BLUE} />
            </Svg>
          </SideButton>
          <SideButton type="button" aria-label="Styles">
            <Svg>
              <path d="M1 11.500L5 1h1l3.500 8M2.500 8h5.500" strokeWidth="1.600" />
              <path d="M14.500 5l-5 6 1.500 1.500 4.500-6z" fill="#fff" />
              <path d="M9.500 11c-2 0-2 3-4 4c3 .5 6-.5 5.500-2.500z" fill="#5fa9dc" stroke="#2475b8" />
            </Svg>
          </SideButton>
          <SideButton type="button" aria-label="Gallery">
            <Svg>
              <path d="M1.500 12.500v-11h4l1 2h7v2h-9.500z" stroke="#e07a28" fill="#fbe0b5" />
              <path d="M1.500 12.500l2.500-7h11v7z" stroke="#e07a28" fill="#f9d59b" />
              <path d="M6.500 6.500h8v8h-8z" fill="#fff" />
              <path d="M7 13.500l2.500-3 1.500 1 2-2 1.500 2v2.500z" fill="#3f9edd" stroke="#2475b8" />
            </Svg>
          </SideButton>
          <SideButton type="button" aria-label="Navigator">
            <Svg>
              <circle cx="8" cy="8" r="6.500" fill="#fff" strokeWidth="1.200" />
              <path d="M11.500 4.500l-2 5-5 2 2-5z" fill="#4a9fdd" stroke="#2475b8" />
              <circle cx="8" cy="8" r="1" fill="#fff" stroke="none" />
            </Svg>
          </SideButton>
          <SideButton type="button" aria-label="Functions">
            <Svg h={20}><Serif x="2" y="15" fontSize="17" fontStyle="italic" fill="#2f86c9">fx</Serif></Svg>
          </SideButton>
          <SideHandle type="button" aria-label="Hide sidebar">
            <svg width="4" height="6" viewBox="0 0 4 6" aria-hidden="true"><path d="M.5 0v6L4 3z" fill="#fff" /></svg>
          </SideHandle>
        </SideBar>
      </Middle>

      <StatusBar>
        <Status $center>
          <Svg w={12} h={12}><path d="M1.500 1.500h8l1 1v8h-9zM3.500 1.500v3h5v-3M3.500 10.500v-4h5v4" stroke="#9a9a9a" /></Svg>
        </Status>
        <Status>Sheet 2 of 6</Status>
        <Status />
        <Status>PageStyle_Liste</Status>
        <Status $center>English (USA)</Status>
        <Status />
        <Status>
          <Svg w={12} h={8}><path d="M.5 1h11v6h-11z" stroke={BLUE} fill="#fff" /></Svg>
          <Svg w={5} h={11}><path d="M0 .5h5M0 10.500h5M2.500 .5v10" /></Svg>
        </Status>
        <Status />
        <Status />
        <Status $center>Average: ; Sum: 0</Status>
        <Status>
          <SmallTool type="button" aria-label="Zoom out" $width={7}>
            <Svg w={7} h={7}><path d="M0 3.500h7" stroke="#222" strokeWidth="1.500" /></Svg>
          </SmallTool>
          <ZoomSlider type="range" aria-label="Zoom" min={0} max={100} defaultValue={48} />
          <SmallTool type="button" aria-label="Zoom in" $width={7}>
            <Svg w={7} h={7}><path d="M0 3.500h7M3.500 0v7" stroke="#222" strokeWidth="1.500" /></Svg>
          </SmallTool>
        </Status>
        <Status $bare $center>100%</Status>
      </StatusBar>
    </Window>
  );
}
